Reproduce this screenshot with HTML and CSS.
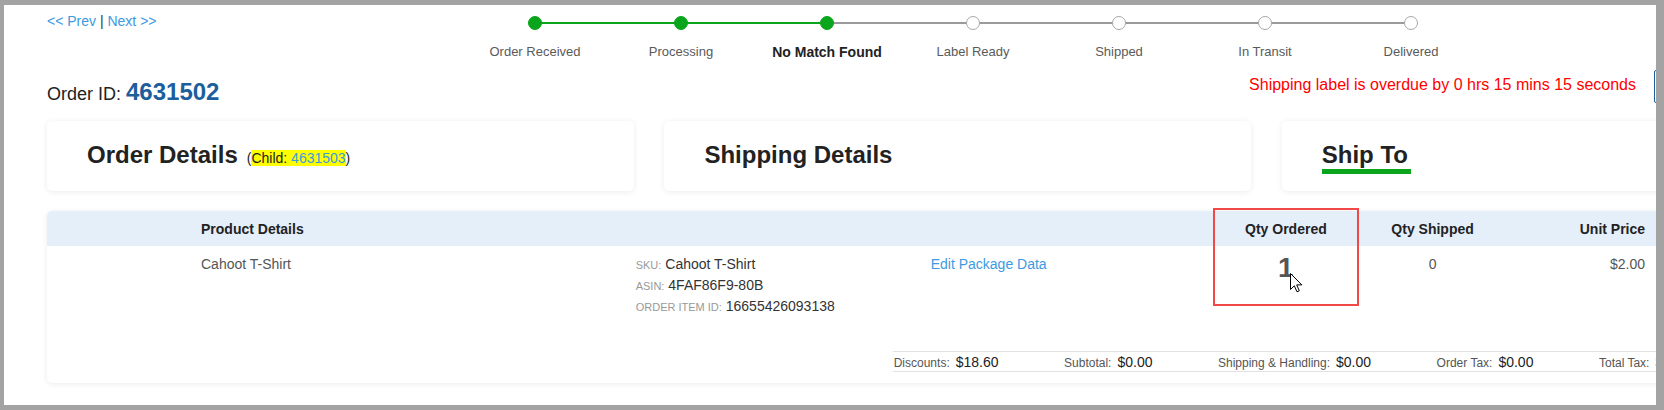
FILE: index.html
```html
<!DOCTYPE html>
<html lang="en">
<head>
<meta charset="utf-8">
<title>Order 4631502</title>
<link rel="stylesheet" href="styles.css">
</head>
<body>
<div class="frame">
  <div class="page">
    <div class="topbar">
      <div class="pager"><a class="lnk" href="#">&lt;&lt; Prev</a> | <a class="lnk" href="#">Next &gt;&gt;</a></div>
      <ol class="stepper">
        <li class="step done lead first"><span class="dot"></span><span class="label">Order Received</span></li>
        <li class="step done lead"><span class="dot"></span><span class="label">Processing</span></li>
        <li class="step done current"><span class="dot"></span><span class="label">No Match Found</span></li>
        <li class="step"><span class="dot"></span><span class="label">Label Ready</span></li>
        <li class="step"><span class="dot"></span><span class="label">Shipped</span></li>
        <li class="step"><span class="dot"></span><span class="label">In Transit</span></li>
        <li class="step last"><span class="dot"></span><span class="label">Delivered</span></li>
      </ol>
    </div>

    <div class="order-row">
      <div class="order-id">Order ID: <span class="order-num">4631502</span></div>
      <div class="overdue">Shipping label is overdue by 0 hrs 15 mins 15 seconds</div>
      <button class="action" type="button"></button>
    </div>

    <div class="cards">
      <div class="card"><h2 class="card-title">Order Details<span class="child">(<mark>Child: <a href="#">4631503</a></mark>)</span></h2></div>
      <div class="card"><h2 class="card-title">Shipping Details</h2></div>
      <div class="card"><h2 class="card-title ship">Ship To</h2></div>
    </div>

    <div class="table-card">
      <div class="grid thead">
        <div></div>
        <div>Product Details</div>
        <div></div>
        <div></div>
        <div class="c">Qty Ordered</div>
        <div class="c">Qty Shipped</div>
        <div class="r">Unit Price</div>
        <div></div>
      </div>
      <div class="grid trow">
        <div></div>
        <div>Cahoot T-Shirt</div>
        <div class="meta">
          <div><span class="meta-label">SKU:</span> <span class="meta-val">Cahoot T-Shirt</span></div>
          <div><span class="meta-label">ASIN:</span> <span class="meta-val">4FAF86F9-80B</span></div>
          <div><span class="meta-label">Order Item ID:</span> <span class="meta-val">16655426093138</span></div>
        </div>
        <div><a class="lnk" href="#">Edit Package Data</a></div>
        <div class="c qty-big">1</div>
        <div class="c">0</div>
        <div class="r">$2.00</div>
        <div></div>
      </div>
      <div class="totals">
        <div class="tot"><span class="tot-label">Discounts:</span><span class="tot-val">$18.60</span></div>
        <div class="tot"><span class="tot-label">Subtotal:</span><span class="tot-val">$0.00</span></div>
        <div class="tot"><span class="tot-label">Shipping &amp; Handling:</span><span class="tot-val">$0.00</span></div>
        <div class="tot"><span class="tot-label">Order Tax:</span><span class="tot-val">$0.00</span></div>
        <div class="tot"><span class="tot-label">Total Tax:</span><span class="tot-val">$0.00</span></div>
      </div>
      <div class="hl-box"></div>
      <svg class="cursor" viewBox="0 0 13 20" width="13" height="20" aria-hidden="true">
        <path d="M0.5 0.5 L0.5 16.5 L4.3 12.8 L7 18.8 L9.3 17.8 L6.7 11.9 L11.8 11.9 Z" fill="#fff" stroke="#000" stroke-width="1" stroke-linejoin="miter"/>
      </svg>
    </div>
  </div>
</div>
</body>
</html>
```

FILE: styles.css
```css
* { box-sizing: border-box; }
html, body { margin: 0; padding: 0; }
body {
  width: 1664px;
  height: 410px;
  overflow: hidden;
  background: #a3a3a3;
  font-family: "Liberation Sans", Arial, Helvetica, sans-serif;
  color: #333;
}
.frame {
  margin: 5px 0 0 4px;
  width: 1652px;
  height: 400px;
  background: #fff;
  overflow: hidden;
}
.page {
  width: 1865px;
  padding-left: 43px;
}
.lnk { color: #3d9ae0; text-decoration: none; }

/* top bar */
.topbar { display: flex; height: 65px; }
.pager {
  width: 415px;
  margin-top: 8px;
  font-size: 14px;
  line-height: 16px;
  color: #333;
}
.stepper {
  display: flex;
  margin: 11px 0 0;
  padding: 0;
  list-style: none;
}
.step {
  --l: #9a9a9a;
  --r: #9a9a9a;
  width: 146px;
  display: flex;
  flex-direction: column;
  align-items: center;
  background-image: linear-gradient(var(--l), var(--l)), linear-gradient(var(--r), var(--r));
  background-repeat: no-repeat;
  background-size: 50% 2px, 50% 2px;
  background-position: left 0 top 6px, right 0 top 6px;
}
.step.done { --l: #0aa51c; }
.step.lead { --r: #0aa51c; }
.step.first { --l: transparent; }
.step.last { --r: transparent; }
.dot {
  width: 14px;
  height: 14px;
  border-radius: 50%;
  background: #fff;
  border: 1px solid #a8a8a8;
}
.step.done .dot { background: #0aa51c; border-color: #0aa51c; }
.label {
  margin-top: 14px;
  font-size: 13px;
  line-height: 16px;
  color: #5a5a5a;
  white-space: nowrap;
}
.step.current .label { font-size: 14px; font-weight: bold; color: #222; }

/* order row */
.order-row { display: flex; align-items: flex-start; height: 33px; }
.order-id {
  margin-top: 8px;
  font-size: 18px;
  line-height: 28px;
  color: #222;
}
.order-num { font-size: 24px; font-weight: bold; color: #1c5f9c; }
.overdue {
  margin-left: auto;
  margin-top: 5px;
  font-size: 16px;
  line-height: 20px;
  color: #ff0000;
}
.action {
  margin-left: 18px;
  width: 215px;
  height: 33px;
  padding: 0;
  border: 1px solid #1c5f9c;
  border-radius: 2px;
  background: #fff;
}

/* cards */
.cards { display: flex; gap: 30.4px; margin-top: 18px; }
.card {
  width: 587px;
  height: 70px;
  padding: 20px 40px 0;
  background: #fff;
  border-radius: 5px;
  box-shadow: 0 1px 6px rgba(0, 0, 0, 0.08);
}
.card-title {
  margin: 0;
  font-size: 24px;
  font-weight: bold;
  line-height: normal;
  color: #222;
  white-space: nowrap;
}
.card-title.ship {
  display: inline-block;
  padding-right: 3px;
  border-bottom: 5px solid #0aa51c;
}
.child { margin-left: 9px; font-size: 14px; font-weight: normal; color: #222; }
.child mark { background: #ffff00; color: #222; }
.child a { color: #3d9ae0; text-decoration: none; }

/* table */
.table-card {
  position: relative;
  width: 1822px;
  height: 172px;
  margin-top: 20px;
  background: #fff;
  border-radius: 5px;
  box-shadow: 0 1px 6px rgba(0, 0, 0, 0.08);
}
.grid {
  display: grid;
  grid-template-columns: 146px 434.7px 295px 290px 146.4px 147px 147px 1fr;
}
.grid > div { padding: 0 8px; }
.thead {
  height: 35px;
  align-items: center;
  background: #e5effa;
  border-radius: 5px 5px 0 0;
  font-size: 14px;
  font-weight: bold;
  color: #222;
}
.trow {
  height: 105px;
  padding-top: 8px;
  align-items: start;
  font-size: 14px;
  line-height: 20px;
  color: #555;
}
.c { text-align: center; }
.r { text-align: right; }
.meta-label { font-size: 11px; color: #999; text-transform: uppercase; }
.meta-val { color: #333; }
.qty-big { font-size: 28px; line-height: 28px; font-weight: bold; color: #555; }

.totals {
  display: flex;
  gap: 65.5px;
  height: 21px;
  margin-left: 845.7px;
  padding-left: 1px;
  border-top: 1px solid #e2e2e2;
  border-bottom: 1px solid #e2e2e2;
  line-height: 19px;
  white-space: nowrap;
}
.tot-label { margin-right: 6px; font-size: 12px; color: #555; }
.tot-val { font-size: 14px; color: #222; }

.hl-box {
  position: absolute;
  left: 1165.6px;
  top: -3px;
  width: 146.4px;
  height: 98px;
  border: 2px solid #f24848;
}
.cursor {
  position: absolute;
  left: 1243px;
  top: 62px;
}
```
